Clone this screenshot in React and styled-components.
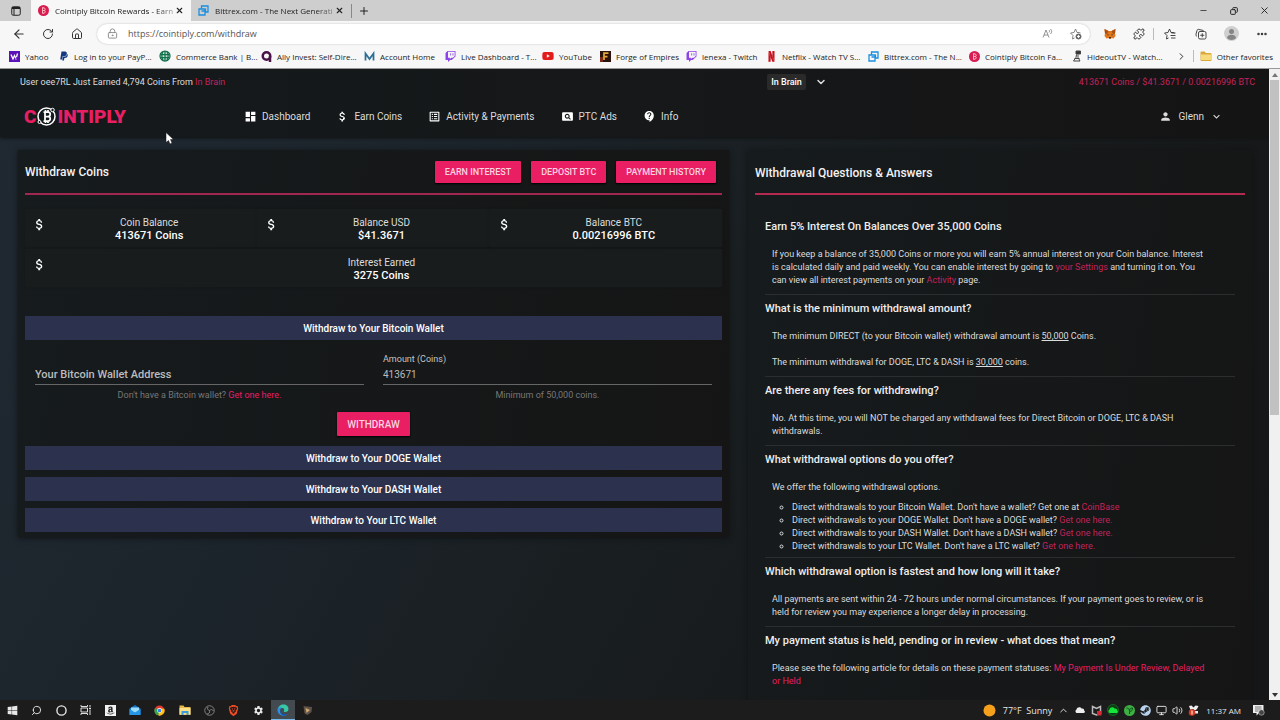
import React from "react";
import styled, { createGlobalStyle, css } from "styled-components";
import {
  MdDashboard, MdAttachMoney, MdListAlt, MdPageview, MdContactSupport, MdPerson, MdExpandMore, MdSettings,
} from "react-icons/md";
import { FaPaypal, FaTwitch, FaYoutube, FaSteam, FaWindows, FaAmazon } from "react-icons/fa";
import { SiNetflix, SiBrave } from "react-icons/si";
import {
  ArrowLeft, RotateCw, House, LockKeyhole, X, Plus, Minus, Copy, Puzzle, Ellipsis, ChevronDown,
  ChevronRight, ChevronUp, Search, Circle, Monitor, Volume2,
} from "lucide-react";

const pink = "#e91e63";
const ui = `"Open Sans", "Noto Sans", sans-serif`;
const body = `Roboto, "Liberation Sans", sans-serif`;

const GlobalStyle = createGlobalStyle`
  *, *::before, *::after { box-sizing: border-box; }
  body { margin: 0; overflow: hidden; background: #1b2228; }
  button, input { font: inherit; color: inherit; border: 0; padding: 0; background: none; }
  a { text-decoration: none; color: inherit; }
  svg { display: block; flex: none; }
  h1, h2, h3, p, ul { margin: 0; padding: 0; font: inherit; }
`;

const Screen = styled.div`
  height: 100vh;
  display: flex;
  flex-direction: column;
  font-family: ${body};
  font-size: 9px;
`;

/* Browser window */
const Browser = styled.header`
  flex: none;
  font-family: ${ui};
  color: #222;
  background: #f7f7f7;
  border-bottom: 1px solid #999;
`;
const TabStrip = styled.div`
  height: 21px;
  display: flex;
  align-items: stretch;
  background: #cecece;
`;
const TabMenu = styled.button`
  width: 31px;
  display: grid;
  place-items: center;
`;
const Tab = styled.div`
  width: 160px;
  padding: 0 7px;
  display: flex;
  align-items: center;
  gap: 6px;
  font-size: 8px;
  background: ${(p) => (p.$active ? "#f7f7f7" : "transparent")};
`;
const TabTitle = styled.button`
  flex: 1;
  min-width: 0;
  margin-right: -4px;
  white-space: nowrap;
  text-align: left;
  mask-image: linear-gradient(90deg, #000 85%, #0006);
`;
const NewTab = styled.button`
  width: 24px;
  height: 14px;
  margin: 4px 0 0;
  display: grid;
  place-items: center;
  border-left: 1px solid #888;
`;
const WindowButtons = styled.div`
  margin-left: auto;
  width: 92px;
  display: grid;
  grid-template-columns: repeat(3, 1fr);
  place-items: center;
`;
const Toolbar = styled.div`
  height: 25px;
  padding: 2px 4px;
  display: flex;
  align-items: center;
`;
const ToolButton = styled.button`
  width: ${(p) => p.$w || 29}px;
  height: 20px;
  display: grid;
  place-items: center;
  color: ${(p) => p.$tone || "#333"};
`;
const AddressBar = styled.div`
  flex: 1;
  height: 20px;
  margin: 0 5px 0 6px;
  padding: 0 8px 0 10px;
  display: flex;
  align-items: center;
  gap: 10px;
  border-radius: 10px;
  background: #fff;
  box-shadow: 0 0 2px #bbb;
`;
const AddressInput = styled.input`
  flex: 1;
  font-size: 9px;
  color: #555;
  outline: 0;
`;
const Rule = styled.span`
  width: 1px;
  height: 12px;
  background: #bbb;
`;
const Bookmarks = styled.nav`
  height: 22px;
  padding: 0 7px 2px 9px;
  display: flex;
  align-items: center;
  font-size: 8px;
`;
const Bookmark = styled.a`
  width: ${(p) => p.$w}px;
  display: flex;
  align-items: center;
  gap: 5px;
  white-space: nowrap;
`;
const MoreBookmarks = styled.div`
  margin-left: auto;
  display: flex;
  align-items: center;
  gap: 6px;
`;

/* Page */
const Viewport = styled.div`
  flex: 1;
  min-height: 0;
  display: flex;
`;
const Page = styled.div`
  flex: 1;
  min-width: 0;
  overflow: hidden;
  color: #dcdcdc;
  background: linear-gradient(120deg, #202932 0%, #1c242b 32%, #191e20 55%, #161819 80%, #151617 100%);
`;
const SiteHeader = styled.header`
  height: 68px;
  background: linear-gradient(90deg, #14191b 0%, #161819 50%, #151415 100%);
  box-shadow: 0 1px 3px #111;
`;
const TopBar = styled.div`
  height: 26px;
  padding: 0 14px 0 20px;
  display: grid;
  grid-template-columns: 60.5% 1fr auto;
  align-items: center;
`;
const Offer = styled.div`
  display: flex;
  align-items: center;
  gap: 9px;
`;
const OfferButton = styled.button`
  height: 16px;
  padding: 0 4px;
  font-weight: 500;
  color: #fff;
  background: #2a2a2b;
  border-radius: 2px;
`;
const Accent = styled.a`
  color: ${(p) => (p.$bright ? "#e91e63" : "#c2235a")};
`;
const NavBar = styled.div`
  height: 43px;
  padding: 0 46px 0 24px;
  display: flex;
  align-items: center;
`;
const Logo = styled.a`
  width: 220px;
  display: flex;
  align-items: center;
  color: ${pink};
  font-size: 19px;
  font-weight: 900;
  line-height: 24px;
`;
const NavLinks = styled.nav`
  display: flex;
  gap: 26px;
`;
const NavLink = styled.a`
  display: flex;
  align-items: center;
  gap: 5px;
  font-size: 10px;
  svg { color: #fff; }
`;
const Account = styled.button`
  margin-left: auto;
  display: flex;
  align-items: center;
  gap: 6px;
  font-size: 10px;
`;
const Columns = styled.main`
  padding: 13px 17px 0 18px;
  display: grid;
  grid-template-columns: 711fr 504fr;
  gap: 19px;
  align-items: start;
`;
const Card = styled.section`
  padding: 0 7px 5px;
  background: linear-gradient(100deg, #161b1d, #151515);
  box-shadow: 0 1px 5px #101214;
`;
const CardHead = styled.div`
  height: 45px;
  padding: ${(p) => (p.$soft ? "3px 0 0" : "0 6px 0 0")};
  display: flex;
  align-items: center;
  gap: 10px;
  border-bottom: 2px solid ${(p) => (p.$soft ? "#b3294f" : "#a02850")};
`;
const CardTitle = styled.h1`
  margin-right: auto;
  font-size: 12px;
  font-weight: 500;
  color: #f2f2f2;
`;
const PinkButton = styled.button`
  height: ${(p) => (p.$tall ? 24 : 22)}px;
  padding: 0 10px;
  font-size: ${(p) => (p.$tall ? 10 : 9)}px;
  font-weight: 500;
  color: #fbd3e0;
  background: ${pink};
  border-radius: 1px;
  box-shadow: 0 1px 2px #000;
`;
const Stats = styled.div`
  margin-top: 14px;
  display: grid;
  grid-template-columns: repeat(3, 1fr);
  row-gap: 2px;
`;
const Stat = styled.div`
  height: 38px;
  padding: 7px 6px 5px 7px;
  display: flex;
  background: #181c1d;
  box-shadow: 0 0 2px #161a1b;
  svg { color: #fff; margin-top: 1px; }
  ${(p) => p.$wide && css`grid-column: 1 / -1;`}
`;
const StatText = styled.div`
  flex: 1;
  text-align: center;
  font-size: 10px;
  line-height: 13px;
  strong { display: block; font-size: 11px; font-weight: 500; color: #fff; }
`;
const Wallets = styled.div`
  margin-top: 29px;
  display: flex;
  flex-direction: column;
  gap: 7px;
`;
const WalletBar = styled.button`
  height: 24px;
  font-size: 10px;
  font-weight: 500;
  color: #fff;
  background: #2c314d;
`;
const WalletForm = styled.form`
  padding: 6px 10px 3px;
  display: grid;
  grid-template-columns: 1fr 1fr;
  column-gap: 19px;
  justify-items: stretch;
`;
const Field = styled.div`
  display: flex;
  flex-direction: column;
  justify-content: flex-end;
  label { line-height: 12px; color: #c4c4c4; }
  input {
    height: 20px;
    font-size: 10px;
    color: #bbb;
    border-bottom: 1px solid #666;
    outline: 0;
  }
  input::placeholder { color: #bdbdbd; font-weight: 500; opacity: 1; font-size: 11px; }
  p { margin-top: 4px; text-align: center; line-height: 13px; font-size: 9px; color: #777; }
`;
const FormAction = styled.div`
  grid-column: 1 / -1;
  margin-top: 10px;
  text-align: center;
`;
const Faq = styled.div`
  padding: 18px 10px 0;
`;
const Question = styled.article`
  padding: 7px 0 ${(p) => (p.$list ? 4 : 7)}px;
  border-bottom: 1px solid #2b2d2e;
  line-height: 13px;
  h3 { line-height: 14px; margin-bottom: 14px; font-size: 11px; font-weight: 500; color: #eee; }
  p { padding-left: 7px; white-space: nowrap; }
  p + p { margin-top: 13px; }
  ul { margin-top: 7px; padding-left: 27px; list-style: circle; white-space: nowrap; }
`;
const ScrollBar = styled.div`
  width: 11px;
  padding: 0 1px;
  display: flex;
  flex-direction: column;
  background: #f0f0f0;
`;
const ScrollArrow = styled.button`
  height: 11px;
  display: grid;
  place-items: center;
`;
const ScrollTrack = styled.div`
  flex: 1;
  &::before { content: ""; display: block; height: 55%; background: #c1c1c1; }
`;
const Pointer = styled.svg`
  position: absolute;
  left: 165px;
  top: 132px;
`;

/* Task bar */
const TaskBar = styled.footer`
  flex: none;
  height: 20px;
  display: flex;
  align-items: center;
  justify-content: space-between;
  color: #e8e8e8;
  background: #1c1c1c;
  font-family: ${ui};
`;
const TaskApps = styled.div`
  width: 320px;
  display: flex;
`;
const TaskButton = styled.button`
  flex: 1;
  height: 20px;
  display: grid;
  place-items: center;
  background: ${(p) => (p.$active ? "#444b50" : "transparent")};
  border-bottom: ${(p) => (p.$active ? "1px solid #76b9ed" : "0")};
`;
const Tray = styled.div`
  padding-right: 15px;
  display: flex;
  align-items: center;
  gap: 5px;
`;
const TrayText = styled.span`
  margin: 0 ${(p) => (p.$clock ? 6 : 1)}px 0 2px;
  font-size: ${(p) => (p.$clock ? 8 : 9)}px;
  white-space: nowrap;
`;

/* Drawings */
const CoinIcon = () => (
  <svg width="11" height="11" viewBox="0 0 22 22">
    <circle cx="11" cy="11" r="11" fill="#d81b52" />
    <path d="M8 6h4a2.5 2.5 0 0 1 0 5H9m3 0a2.500 2.500 0 0 1 0 5H8M10 4v2M10 16v2M9 6v10" fill="none" stroke="#fbb" strokeWidth="1.800" />
  </svg>
);
const BittrexIcon = () => (
  <svg width="11" height="11" viewBox="0 0 22 22" fill="none" stroke="#1b8fe0" strokeWidth="2.600">
    <path d="M7 7V2h13v12h-5M2 8h12v12H2zM7 12h8V7" />
  </svg>
);
const YahooIcon = () => (
  <svg width="11" height="11" viewBox="0 0 22 22">
    <rect width="22" height="22" fill="#5b12b8" />
    <path d="M4 7l4 9 3-7 3 6M17 5l-2 7M14 17v1" stroke="#fff" strokeWidth="2.600" fill="none" />
  </svg>
);
const GlobeIcon = () => (
  <svg width="12" height="12" viewBox="0 0 24 24" fill="none" stroke="#14704e" strokeWidth="2.500">
    <circle cx="12" cy="12" r="10" fill="#bfe5d5" />
    <path d="M2 9h20M2 15h20M12 2v20M8 3c-3 6-3 12 0 18M16 3c3 6 3 12 0 18" />
  </svg>
);
const AllyIcon = () => (
  <svg width="11" height="11" viewBox="0 0 22 22" fill="none" stroke="#4b1248" strokeWidth="5">
    <circle cx="11" cy="10" r="7.500" />
    <path d="M18 10v12" />
  </svg>
);
const AccountIcon = () => (
  <svg width="11" height="11" viewBox="0 0 22 22" fill="none" stroke="#2b6f96" strokeWidth="3.500">
    <path d="M3 19V5l8 11 8-11v14" />
  </svg>
);
const ForgeIcon = () => (
  <svg width="11" height="11" viewBox="0 0 22 22">
    <rect width="22" height="22" fill="#2a130c" />
    <path d="M0 12h6v10H0z" fill="#7a2a14" />
    <path d="M8 18V4h9M8 11h7" stroke="#e3a53c" strokeWidth="3.500" fill="none" />
  </svg>
);
const HideoutIcon = () => (
  <svg width="10" height="12" viewBox="0 0 20 24" fill="none" stroke="#444" strokeWidth="2">
    <path d="M8 2h9v6H8z" fill="#333" />
    <path d="M9 9l-1 6-5 7h13l-4-7V9M5 17h10" />
  </svg>
);
const FolderIcon = ({ size = 12 }) => (
  <svg width={size} height={size} viewBox="0 0 24 24">
    <path d="M1 5a2 2 0 0 1 2-2h6l3 3h9a2 2 0 0 1 2 2v12a2 2 0 0 1-2 2H3a2 2 0 0 1-2-2z" fill="#d9a93a" />
    <path d="M2 9h20v11H2z" fill="#f7da7c" />
  </svg>
);
const ExplorerIcon = () => (
  <svg width="12" height="12" viewBox="0 0 24 24">
    <path d="M1 3h8l2 3h12v16H1z" fill="#e8b84a" />
    <path d="M1 8h22v13H1z" fill="#fbe08a" />
    <path d="M5 22v-8h14v8h-4v-4H9v4z" fill="#3d9bd8" />
  </svg>
);
const TabMenuIcon = () => (
  <svg width="10" height="10" viewBox="0 0 20 20" fill="none" stroke="#222" strokeWidth="2">
    <rect x="1.500" y="1.500" width="17" height="17" rx="3" />
    <path d="M2 4h16" strokeWidth="4" />
    <path d="M6 5v13" />
  </svg>
);
const ReadAloudIcon = () => (
  <svg width="11" height="11" viewBox="0 0 22 22" fill="none" stroke="#777" strokeWidth="1.600">
    <path d="M2 19L8 4l6 15M4 14h8M14 4c1.500 1.500 1.500 4 0 5M17 2c3 3 3 7 0 10" />
  </svg>
);
const FavoriteIcon = ({ plus }) => (
  <svg width="12" height="12" viewBox="0 0 24 24" fill="none" stroke={plus ? "#777" : "#333"} strokeWidth="1.800">
    <path d="M9 20l-4 2 1-7-5-5 7-1 3-7 3 7h4l3 1" />
    {plus ? <><circle cx="17" cy="17" r="5" fill="#777" stroke="#555" /><path d="M17 14v6M14 17h6" stroke="#fff" /></> : <path d="M15 10h8M13 15h10M14 20h9" />}
  </svg>
);
const FoxIcon = () => (
  <svg width="12" height="12" viewBox="0 0 24 24">
    <path d="M1 2l8 4h6l8-4-1 9 1 5-4 5-4-1-2 2h-2l-2-2-4 1-4-5 1-5z" fill="#e2761b" />
    <path d="M1 2l8 4-3 6-4-1zM23 2l-8 4 3 6 4-1z" fill="#a84f12" />
    <path d="M7 12l3 2-3 1zM17 12l-3 2 3 1z" fill="#233447" />
    <path d="M10 18h4l-1 3h-2z" fill="#332018" />
  </svg>
);
const CollectionsIcon = () => (
  <svg width="12" height="12" viewBox="0 0 24 24" fill="none" stroke="#333" strokeWidth="1.800">
    <rect x="7" y="7" width="15" height="15" rx="3" />
    <path d="M14.500 10.500v8M10.500 14.500h8M4 17c-2-1-2-3-2-5l2-7c.500-2 2-3 4-2l9 2" />
  </svg>
);
const AvatarIcon = () => (
  <svg width="15" height="15" viewBox="0 0 30 30">
    <circle cx="15" cy="15" r="15" fill="#cfcfcf" />
    <circle cx="15" cy="11" r="5" fill="#858585" />
    <path d="M6 24c0-9 18-9 18 0-4 5-14 5-18 0z" fill="#858585" />
  </svg>
);
const BitcoinMark = () => (
  <svg width="21" height="21" viewBox="0 0 42 42" fill="none" stroke="#fff">
    <circle cx="21" cy="21" r="17" strokeWidth="3" />
    <circle cx="33" cy="8" r="3.500" fill="#171a1b" strokeWidth="2" />
    <circle cx="7" cy="32" r="3" fill="#171a1b" strokeWidth="2" />
    <path d="M15 12h9a4.500 4.500 0 0 1 0 9h-6m6 0a4.500 4.500 0 0 1 0 9h-9M18 12v18M19 8v4M24 8v4M19 30v4M24 30v4" strokeWidth="3.500" />
  </svg>
);
const TaskViewIcon = () => (
  <svg width="12" height="12" viewBox="0 0 24 24" fill="none" stroke="#ddd" strokeWidth="2">
    <path d="M2 2v3h13V2M2 22v-3h13v3M2 8h13v8H2zM20 2v4M20 12v10" />
    <path d="M18 9h4" strokeWidth="3" />
  </svg>
);
const MailIcon = () => (
  <svg width="12" height="12" viewBox="0 0 24 24">
    <path d="M1 9l11-7 11 7v13H1z" fill="#1173c7" />
    <path d="M4 7h16v6l-8 5-8-5z" fill="#9bdcf8" />
    <path d="M1 10l11 7 11-7v12H1z" fill="#2596e8" />
  </svg>
);
const ChromeIcon = () => (
  <svg width="11" height="11" viewBox="0 0 22 22">
    <circle cx="11" cy="11" r="10" fill="#e33b2e" />
    <path d="M11 11L2.300 6a10 10 0 0 0 6.700 15z" fill="#2da94f" />
    <path d="M11 11h-1L9 21a10 10 0 0 0 11.500-13.500H11z" fill="#fbc116" />
    <circle cx="11" cy="11" r="4.800" fill="#fff" />
    <circle cx="11" cy="11" r="3.700" fill="#3f7de8" />
  </svg>
);
const ObsIcon = () => (
  <svg width="11" height="11" viewBox="0 0 22 22" fill="none" stroke="#999" strokeWidth="1.600">
    <circle cx="11" cy="11" r="9.500" />
    <path d="M11 11c-4-1-5-4-3-7M11 11c3-3 6-2 8 1M11 11c1 4-1 7-5 7" />
  </svg>
);
const EdgeIcon = () => (
  <svg width="12" height="12" viewBox="0 0 24 24">
    <path d="M1 12C2 5 7 1 13 1c6 0 10 4 10 9 0 4-3 6-7 6-2 0-3-1-2-2 2-3-1-6-4-6-5 0-8 2-9 4z" fill="#35c9a7" />
    <path d="M1 12c0-4 5-7 9-5-4 2-5 6-3 10 3 5 9 6 14 3-3 4-8 4-11 3-6-1-9-6-9-11z" fill="#2b8fe6" />
    <path d="M8 10c-3 6 2 12 13 10-3 4-8 4-11 2-4-3-5-9-2-12z" fill="#1753a0" />
  </svg>
);
const PlayIcon = () => (
  <svg width="11" height="11" viewBox="0 0 22 22">
    <path d="M3 2l17 2-1 10-8 6-6-3z" fill="#5d5248" />
    <path d="M7 6l9 4-7 6z" fill="#d0a870" />
  </svg>
);
const CloudIcon = ({ tone = "#eee", ring }) => (
  <svg width="12" height="12" viewBox="0 0 24 24">
    {ring && <circle cx="12" cy="12" r="11" fill="#0c3d14" stroke="#14a32e" />}
    <path d="M5 18a4 4 0 0 1 0-7c1-5 8-6 10-2 4-1 6 2 5 4 3 1 2 5-1 5z" fill={tone} />
  </svg>
);
const ShieldIcon = () => (
  <svg width="11" height="11" viewBox="0 0 22 22">
    <path d="M3 3l8 4 8-4v14l-8 3-8-3z" fill="none" stroke="#bbb" strokeWidth="3" />
    <path d="M12 12h9v9h-9z" fill="#d32a36" />
  </svg>
);
const GreenIcon = () => (
  <svg width="11" height="11" viewBox="0 0 22 22">
    <circle cx="11" cy="11" r="11" fill="#3cb043" />
    <path d="M5 6c4 0 6 2 6 6 0-4 2-6 6-6 0 5-2 7-6 7v5" fill="none" stroke="#11501b" strokeWidth="2" />
  </svg>
);
const AlertIcon = () => (
  <svg width="11" height="11" viewBox="0 0 22 22">
    <path d="M2 2l5-1 4 4 4-4 6 1-3 6-4 3-4-3-5 2zM13 12h7v5h-6z" fill="#eee" />
    <circle cx="8" cy="15" r="6.500" fill="#d63a24" />
    <path d="M8 11v8" stroke="#fff" strokeWidth="2" />
  </svg>
);
const NoticeIcon = () => (
  <svg width="13" height="12" viewBox="0 0 26 24">
    <path d="M2 2h21v16h-9l-5 5v-5H2z" fill="#eee" />
    <path d="M6 6h13M6 10h13M6 14h7" stroke="#555" strokeWidth="1.600" />
    <circle cx="19" cy="17" r="5.500" fill="#444" stroke="#ddd" />
  </svg>
);

const bookmarks = [
  ["Yahoo", 50, <YahooIcon />],
  ["Log in to your PayP...", 100, <FaPaypal size={10} color="#123a82" />],
  ["Commerce Bank | B...", 102, <GlobeIcon />],
  ["Ally Invest: Self-Dire...", 103, <AllyIcon />],
  ["Account Home", 81, <AccountIcon />],
  ["Live Dashboard - T...", 97, <FaTwitch size={11} color="#8c44e8" />],
  ["YouTube", 58, <FaYoutube size={12} color="#e21b1b" />],
  ["Forge of Empires", 86, <ForgeIcon />],
  ["lenexa - Twitch", 80, <FaTwitch size={11} color="#8c44e8" />],
  ["Netflix - Watch TV S...", 102, <SiNetflix size={11} color="#c8101c" />],
  ["Bittrex.com - The N...", 101, <BittrexIcon />],
  ["Cointiply Bitcoin Fa...", 103, <CoinIcon />],
  ["HideoutTV - Watch...", 90, <HideoutIcon />],
];
const navItems = [
  ["Dashboard", MdDashboard],
  ["Earn Coins", MdAttachMoney],
  ["Activity & Payments", MdListAlt],
  ["PTC Ads", MdPageview],
  ["Info", MdContactSupport],
];
const stats = [
  ["Coin Balance", "413671 Coins"],
  ["Balance USD", "$41.3671"],
  ["Balance BTC", "0.00216996 BTC"],
  ["Interest Earned", "3275 Coins"],
];
const apps = [
  ["Start", <FaWindows size={11} />],
  ["Search", <Search size={11} style={{ transform: "scaleX(-1)" }} />],
  ["Cortana", <Circle size={11} strokeWidth={3} />],
  ["Task view", <TaskViewIcon />],
  ["Amazon", <FaAmazon size={11} color="#222" style={{ background: "#f2f2f2", padding: 1 }} />],
  ["Mail", <MailIcon />],
  ["Chrome", <ChromeIcon />],
  ["File Explorer", <ExplorerIcon />],
  ["OBS", <ObsIcon />],
  ["Brave", <SiBrave size={11} color="#f04c25" />],
  ["Settings", <MdSettings size={11} />],
  ["Edge", <EdgeIcon />],
  ["Player", <PlayIcon />],
];

export default function App() {
  return (
    <Screen>
      <GlobalStyle />
      <Browser>
        <TabStrip>
          <TabMenu aria-label="Tab actions"><TabMenuIcon /></TabMenu>
          <Tab $active>
            <CoinIcon />
            <TabTitle>Cointiply Bitcoin Rewards - Earn</TabTitle>
            <button aria-label="Close tab"><X size={9} strokeWidth={3} /></button>
          </Tab>
          <Tab>
            <BittrexIcon />
            <TabTitle>Bittrex.com - The Next Generatio</TabTitle>
            <button aria-label="Close tab"><X size={9} strokeWidth={3} /></button>
          </Tab>
          <NewTab aria-label="New tab"><Plus size={12} strokeWidth={2} /></NewTab>
          <WindowButtons>
            <button aria-label="Minimize"><Minus size={9} /></button>
            <button aria-label="Restore"><Copy size={8} strokeWidth={3} style={{ transform: "scaleX(-1)" }} /></button>
            <button aria-label="Close"><X size={11} strokeWidth={2} /></button>
          </WindowButtons>
        </TabStrip>
        <Toolbar>
          <ToolButton aria-label="Back"><ArrowLeft size={14} strokeWidth={2} /></ToolButton>
          <ToolButton aria-label="Reload"><RotateCw size={12} strokeWidth={2} /></ToolButton>
          <ToolButton aria-label="Home"><House size={12} strokeWidth={2} /></ToolButton>
          <AddressBar>
            <LockKeyhole size={11} color="#888" strokeWidth={2} />
            <AddressInput aria-label="Address" defaultValue="https://cointiply.com/withdraw" />
            <ToolButton $w={25} aria-label="Read aloud"><ReadAloudIcon /></ToolButton>
            <ToolButton $w={12} aria-label="Add to favorites"><FavoriteIcon plus /></ToolButton>
          </AddressBar>
          <ToolButton aria-label="Wallet"><FoxIcon /></ToolButton>
          <ToolButton aria-label="Extensions"><Puzzle size={12} /></ToolButton>
          <Rule />
          <ToolButton $w={32} aria-label="Favorites"><FavoriteIcon /></ToolButton>
          <ToolButton aria-label="Collections"><CollectionsIcon /></ToolButton>
          <ToolButton $w={32} aria-label="Profile"><AvatarIcon /></ToolButton>
          <ToolButton aria-label="Settings and more"><Ellipsis size={12} strokeWidth={3} /></ToolButton>
        </Toolbar>
        <Bookmarks>
          {bookmarks.map(([label, w, icon], i) => (
            <Bookmark key={i} href="#" $w={w}>{icon}{label}</Bookmark>
          ))}
          <MoreBookmarks>
            <ChevronRight size={11} />
            <Rule />
            <Bookmark href="#"><FolderIcon />Other favorites</Bookmark>
          </MoreBookmarks>
        </Bookmarks>
      </Browser>

      <Viewport>
        <Page>
          <SiteHeader>
            <TopBar>
              <span>User oee7RL Just Earned 4,794 Coins From <Accent href="#">In Brain</Accent></span>
              <Offer>
                <OfferButton>In Brain</OfferButton>
                <ChevronDown size={12} strokeWidth={3} />
              </Offer>
              <Accent href="#">413671 Coins / $41.3671 / 0.00216996 BTC</Accent>
            </TopBar>
            <NavBar>
              <Logo href="#" aria-label="Cointiply">C<BitcoinMark />INTIPLY</Logo>
              <NavLinks>
                {navItems.map(([label, Icon]) => (
                  <NavLink key={label} href="#"><Icon size={13} />{label}</NavLink>
                ))}
              </NavLinks>
              <Account><MdPerson size={13} />Glenn<MdExpandMore size={13} /></Account>
            </NavBar>
          </SiteHeader>

          <Columns>
            <Card>
              <CardHead>
                <CardTitle>Withdraw Coins</CardTitle>
                <PinkButton>EARN INTEREST</PinkButton>
                <PinkButton>DEPOSIT BTC</PinkButton>
                <PinkButton>PAYMENT HISTORY</PinkButton>
              </CardHead>
              <Stats>
                {stats.map(([label, value], i) => (
                  <Stat key={label} $wide={i === 3}>
                    <MdAttachMoney size={15} />
                    <StatText>{label}<strong>{value}</strong></StatText>
                  </Stat>
                ))}
              </Stats>
              <Wallets>
                <WalletBar>Withdraw to Your Bitcoin Wallet</WalletBar>
                <WalletForm onSubmit={(e) => e.preventDefault()}>
                  <Field>
                    <input aria-label="Your Bitcoin Wallet Address" placeholder="Your Bitcoin Wallet Address" />
                    <p>Don't have a Bitcoin wallet? <Accent href="#" $bright>Get one here.</Accent></p>
                  </Field>
                  <Field>
                    <label htmlFor="amount">Amount (Coins)</label>
                    <input id="amount" defaultValue="413671" />
                    <p>Minimum of 50,000 coins.</p>
                  </Field>
                  <FormAction><PinkButton $tall type="submit">WITHDRAW</PinkButton></FormAction>
                </WalletForm>
                <WalletBar>Withdraw to Your DOGE Wallet</WalletBar>
                <WalletBar>Withdraw to Your DASH Wallet</WalletBar>
                <WalletBar>Withdraw to Your LTC Wallet</WalletBar>
              </Wallets>
            </Card>

            <Card>
              <CardHead $soft><CardTitle as="h2">Withdrawal Questions &amp; Answers</CardTitle></CardHead>
              <Faq>
                <Question>
                  <h3>Earn 5% Interest On Balances Over 35,000 Coins</h3>
                  <p>
                    If you keep a balance of 35,000 Coins or more you will earn 5% annual interest on your Coin balance. Interest<br />
                    is calculated daily and paid weekly. You can enable interest by going to <Accent href="#">your Settings</Accent> and turning it on. You<br />
                    can view all interest payments on your <Accent href="#">Activity</Accent> page.
                  </p>
                </Question>
                <Question>
                  <h3>What is the minimum withdrawal amount?</h3>
                  <p>The minimum DIRECT (to your Bitcoin wallet) withdrawal amount is <u>50,000</u> Coins.</p>
                  <p>The minimum withdrawal for DOGE, LTC &amp; DASH is <u>30,000</u> coins.</p>
                </Question>
                <Question>
                  <h3>Are there any fees for withdrawing?</h3>
                  <p>No. At this time, you will NOT be charged any withdrawal fees for Direct Bitcoin or DOGE, LTC &amp; DASH<br />withdrawals.</p>
                </Question>
                <Question $list>
                  <h3>What withdrawal options do you offer?</h3>
                  <p>We offer the following withdrawal options.</p>
                  <ul>
                    <li>Direct withdrawals to your Bitcoin Wallet. Don't have a wallet? Get one at <Accent href="#">CoinBase</Accent></li>
                    <li>Direct withdrawals to your DOGE Wallet. Don't have a DOGE wallet? <Accent href="#">Get one here.</Accent></li>
                    <li>Direct withdrawals to your DASH Wallet. Don't have a DASH wallet? <Accent href="#">Get one here.</Accent></li>
                    <li>Direct withdrawals to your LTC Wallet. Don't have a LTC wallet? <Accent href="#">Get one here.</Accent></li>
                  </ul>
                </Question>
                <Question>
                  <h3>Which withdrawal option is fastest and how long will it take?</h3>
                  <p>All payments are sent within 24 - 72 hours under normal circumstances. If your payment goes to review, or is<br />held for review you may experience a longer delay in processing.</p>
                </Question>
                <Question>
                  <h3>My payment status is held, pending or in review - what does that mean?</h3>
                  <p>Please see the following article for details on these payment statuses: <Accent href="#" $bright>My Payment Is Under Review, Delayed<br />or Held</Accent></p>
                  <p>&nbsp;</p>
                </Question>
              </Faq>
            </Card>
          </Columns>
        </Page>
        <ScrollBar>
          <ScrollArrow aria-label="Scroll up"><svg width="6" height="4"><path d="M0 4l3-4 3 4z" fill="#777" /></svg></ScrollArrow>
          <ScrollTrack />
          <ScrollArrow aria-label="Scroll down"><svg width="6" height="4"><path d="M0 0l3 4 3-4z" fill="#333" /></svg></ScrollArrow>
        </ScrollBar>
      </Viewport>

      <TaskBar>
        <TaskApps>
          {apps.map(([label, icon]) => (
            <TaskButton key={label} aria-label={label} $active={label === "Edge"}>{icon}</TaskButton>
          ))}
        </TaskApps>
        <Tray>
          <svg width="13" height="13"><circle cx="6.500" cy="6.500" r="6" fill="#f6a11c" /></svg>
          <TrayText>77°F&nbsp; Sunny</TrayText>
          <ChevronUp size={11} />
          <CloudIcon />
          <ShieldIcon />
          <CloudIcon tone="#16e63a" ring />
          <GreenIcon />
          <FaSteam size={11} color="#b9d3ee" />
          <Monitor size={11} />
          <Volume2 size={11} />
          <AlertIcon />
          <TrayText $clock>11:37 AM</TrayText>
          <NoticeIcon />
        </Tray>
      </TaskBar>
      <Pointer width="9" height="13" viewBox="0 0 18 26">
        <path d="M2 1v20l5-4 3 7 4-2-3-7h6z" fill="#fff" stroke="#111" />
      </Pointer>
    </Screen>
  );
}
